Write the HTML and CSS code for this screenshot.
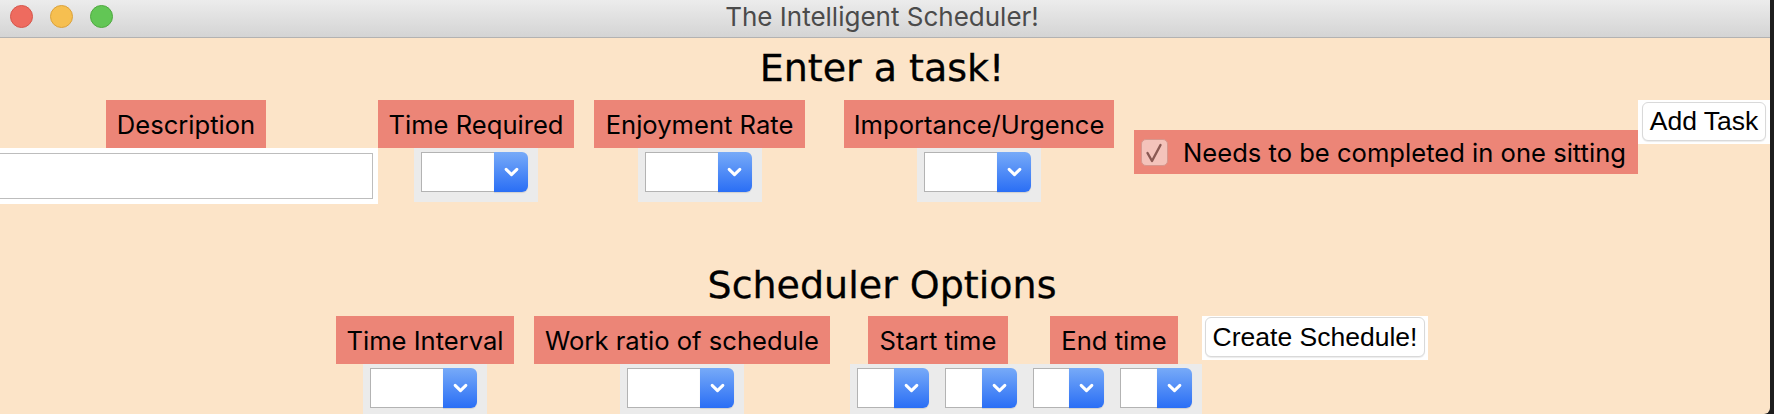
FILE: index.html
```html
<!DOCTYPE html>
<html>
<head>
<meta charset="utf-8">
<title>The Intelligent Scheduler!</title>
<link rel="stylesheet" href="styles.css">
</head>
<body>
<div class="window">
  <div class="titlebar">
    <div class="lights">
      <span class="light red"></span>
      <span class="light yellow"></span>
      <span class="light green"></span>
    </div>
    <div class="title">The Intelligent Scheduler!</div>
    <div></div>
  </div>

  <div class="content">
    <h1 class="heading heading-task">Enter a task!</h1>

    <div class="row row-task">
      <div class="col col-desc">
        <div class="label w-desc">Description</div>
        <div class="field-panel"><div class="field"></div></div>
      </div>

      <div class="col w-time">
        <div class="label w-time">Time Required</div>
        <div class="combo-panel">
          <div class="combo"><div class="combo-text"></div><div class="combo-btn"><svg viewBox="0 0 14 9" width="14" height="9"><path d="M2 2 L7 7 L12 2"/></svg></div></div>
        </div>
      </div>

      <div class="col w-enjoy gap-20">
        <div class="label w-enjoy">Enjoyment Rate</div>
        <div class="combo-panel">
          <div class="combo"><div class="combo-text"></div><div class="combo-btn"><svg viewBox="0 0 14 9" width="14" height="9"><path d="M2 2 L7 7 L12 2"/></svg></div></div>
        </div>
      </div>

      <div class="col w-imp gap-39">
        <div class="label w-imp">Importance/Urgence</div>
        <div class="combo-panel">
          <div class="combo"><div class="combo-text"></div><div class="combo-btn"><svg viewBox="0 0 14 9" width="14" height="9"><path d="M2 2 L7 7 L12 2"/></svg></div></div>
        </div>
      </div>

      <div class="check-label gap-20">
        <span class="checkbox"><svg viewBox="0 0 25 25" width="25" height="25"><path d="M5.5 13 L10 21 L18.5 5"/></svg></span>
        <span class="check-text">Needs to be completed in one sitting</span>
      </div>

      <div class="btn-wrap btn-add">
        <div class="btn">Add Task</div>
      </div>
    </div>

    <h1 class="heading heading-opts">Scheduler Options</h1>

    <div class="row row-opts">
      <div class="col w-interval">
        <div class="label w-interval">Time Interval</div>
        <div class="combo-panel">
          <div class="combo combo-wide"><div class="combo-text"></div><div class="combo-btn"><svg viewBox="0 0 14 9" width="14" height="9"><path d="M2 2 L7 7 L12 2"/></svg></div></div>
        </div>
      </div>

      <div class="col w-ratio gap-20">
        <div class="label w-ratio">Work ratio of schedule</div>
        <div class="combo-panel">
          <div class="combo combo-wide"><div class="combo-text"></div><div class="combo-btn"><svg viewBox="0 0 14 9" width="14" height="9"><path d="M2 2 L7 7 L12 2"/></svg></div></div>
        </div>
      </div>

      <div class="col col-times gap-20">
        <div class="label-row">
          <div class="label w-start">Start time</div>
          <div class="label w-end">End time</div>
        </div>
        <div class="combo-panel combo-panel-times">
          <div class="combo combo-small"><div class="combo-text"></div><div class="combo-btn"><svg viewBox="0 0 14 9" width="14" height="9"><path d="M2 2 L7 7 L12 2"/></svg></div></div>
          <div class="combo combo-small"><div class="combo-text"></div><div class="combo-btn"><svg viewBox="0 0 14 9" width="14" height="9"><path d="M2 2 L7 7 L12 2"/></svg></div></div>
          <div class="combo combo-small"><div class="combo-text"></div><div class="combo-btn"><svg viewBox="0 0 14 9" width="14" height="9"><path d="M2 2 L7 7 L12 2"/></svg></div></div>
          <div class="combo combo-small"><div class="combo-text"></div><div class="combo-btn"><svg viewBox="0 0 14 9" width="14" height="9"><path d="M2 2 L7 7 L12 2"/></svg></div></div>
        </div>
      </div>

      <div class="btn-wrap btn-create">
        <div class="btn">Create Schedule!</div>
      </div>
    </div>
  </div>
</div>
</body>
</html>
```

FILE: styles.css
```css
* { box-sizing: border-box; }

html, body {
  margin: 0;
  padding: 0;
  background: #1d1d1d;
}

.window {
  width: 1770px;
  height: 414px;
  background: #fce4c8;
  overflow: hidden;
  border-radius: 0 0 6px 0;
}

/* ---------- title bar ---------- */
.titlebar {
  height: 38px;
  display: grid;
  grid-template-columns: 1fr auto 1fr;
  align-items: center;
  padding: 0 6px 4px 0;
  background: linear-gradient(#ececec, #d4d4d4);
  border-bottom: 1px solid #b2b2b2;
}

.lights {
  display: flex;
  gap: 17px;
  padding-left: 10px;
}

.light {
  width: 23px;
  height: 23px;
  border-radius: 50%;
  display: block;
}
.light.red { background: #ee6b5f; border: 1px solid #d6564b; }
.light.yellow { background: #f6bf50; border: 1px solid #dba23c; }
.light.green { background: #62c655; border: 1px solid #4fa940; }

.title {
  font-family: Inter, "Liberation Sans", sans-serif;
  font-size: 26px;
  line-height: 30px;
  color: #4b4b4b;
  white-space: nowrap;
}

/* ---------- content ---------- */
.content {
  padding-right: 6px;
}

.heading {
  margin: 0;
  font-family: "DejaVu Sans", sans-serif;
  font-weight: normal;
  font-size: 38px;
  line-height: 44px;
  text-align: center;
  color: #000;
  -webkit-text-stroke: 0.3px #000;
}
.heading-task { margin-top: 8px; }
.heading-opts { margin-top: 59px; }

.row {
  display: flex;
  justify-content: center;
  align-items: flex-start;
}
.row > * { flex-shrink: 0; }

.row-task { margin-top: 10px; height: 104px; }
.row-opts { margin-top: 9px; }

.col {
  display: flex;
  flex-direction: column;
  align-items: center;
}

.gap-20 { margin-left: 20px; }
.gap-39 { margin-left: 39px; }

.label {
  height: 48px;
  background: #ec8577;
  display: flex;
  align-items: center;
  justify-content: center;
  font-family: Inter, "Liberation Sans", sans-serif;
  font-size: 25.6px;
  color: #000;
  white-space: nowrap;
  flex-shrink: 0;
}

.col-desc { width: 384px; }
.w-desc { width: 160px; }
.w-time { width: 196px; }
.w-enjoy { width: 211px; }
.w-imp { width: 270px; }
.w-interval { width: 178px; }
.w-ratio { width: 296px; }
.w-start { width: 140px; }
.w-end { width: 128px; }

/* text field */
.field-panel {
  width: 384px;
  height: 56px;
  padding: 5px;
  background: #fff;
}
.field {
  height: 100%;
  border: 1px solid #bdbdbd;
  background: #fff;
}

/* combo boxes */
.combo-panel {
  width: 124px;
  height: 54px;
  padding: 4px 10px 0 7px;
  background: #ebebeb;
  display: flex;
  gap: 16px;
}

.combo {
  display: flex;
  width: 107px;
  height: 40px;
}
.combo-wide { width: 108px; }
.combo-small { width: 72px; }

.combo-text {
  flex: 1;
  background: #fff;
  border: 1px solid #b3b3b3;
  border-right: none;
}

.combo-btn {
  width: 34px;
  border-radius: 0 6px 6px 0;
  background: linear-gradient(#77aaf8, #2a6ef5);
  display: flex;
  align-items: center;
  justify-content: center;
  box-shadow: 0 1px 1px rgba(0, 0, 0, 0.12);
}
.combo-small .combo-btn { width: 35px; }

.combo-btn svg {
  width: 15px;
  height: 10px;
}
.combo-btn svg path {
  fill: none;
  stroke: #fff;
  stroke-width: 2.8;
  stroke-linecap: round;
  stroke-linejoin: round;
}

/* times group */
.col-times {
  width: 352px;
  align-items: stretch;
}
.label-row {
  display: flex;
  gap: 42px;
  padding-left: 18px;
}
.combo-panel-times {
  width: 352px;
}

/* checkbox */
.check-label {
  width: 504px;
  height: 44px;
  align-self: center;
  background: #ec8577;
  display: flex;
  align-items: center;
  padding-left: 7px;
  gap: 15px;
  font-family: Inter, "Liberation Sans", sans-serif;
  font-size: 25.6px;
  color: #000;
  white-space: nowrap;
}

.checkbox {
  width: 27px;
  height: 27px;
  border-radius: 5px;
  background: #f4c3bb;
  border: 1px solid #d8978d;
  display: flex;
  align-items: center;
  justify-content: center;
}
.checkbox svg path {
  fill: none;
  stroke: #8a5953;
  stroke-width: 2.4;
  stroke-linecap: round;
  stroke-linejoin: round;
}

/* buttons */
.btn-wrap {
  background: #fff;
  height: 44px;
}
.btn-add {
  width: 132px;
  padding: 2px 4px 3px 4px;
}
.btn-create {
  width: 226px;
  padding: 1px 3px 3px 3px;
}

.btn {
  height: 100%;
  border: 1px solid #d9d9d9;
  border-radius: 6px;
  background: #fff;
  box-shadow: 0 1px 1px rgba(0, 0, 0, 0.08);
  display: flex;
  align-items: center;
  justify-content: center;
  font-family: "Liberation Sans", Arial, sans-serif;
  font-size: 26.5px;
  color: #000;
  white-space: nowrap;
}
```
